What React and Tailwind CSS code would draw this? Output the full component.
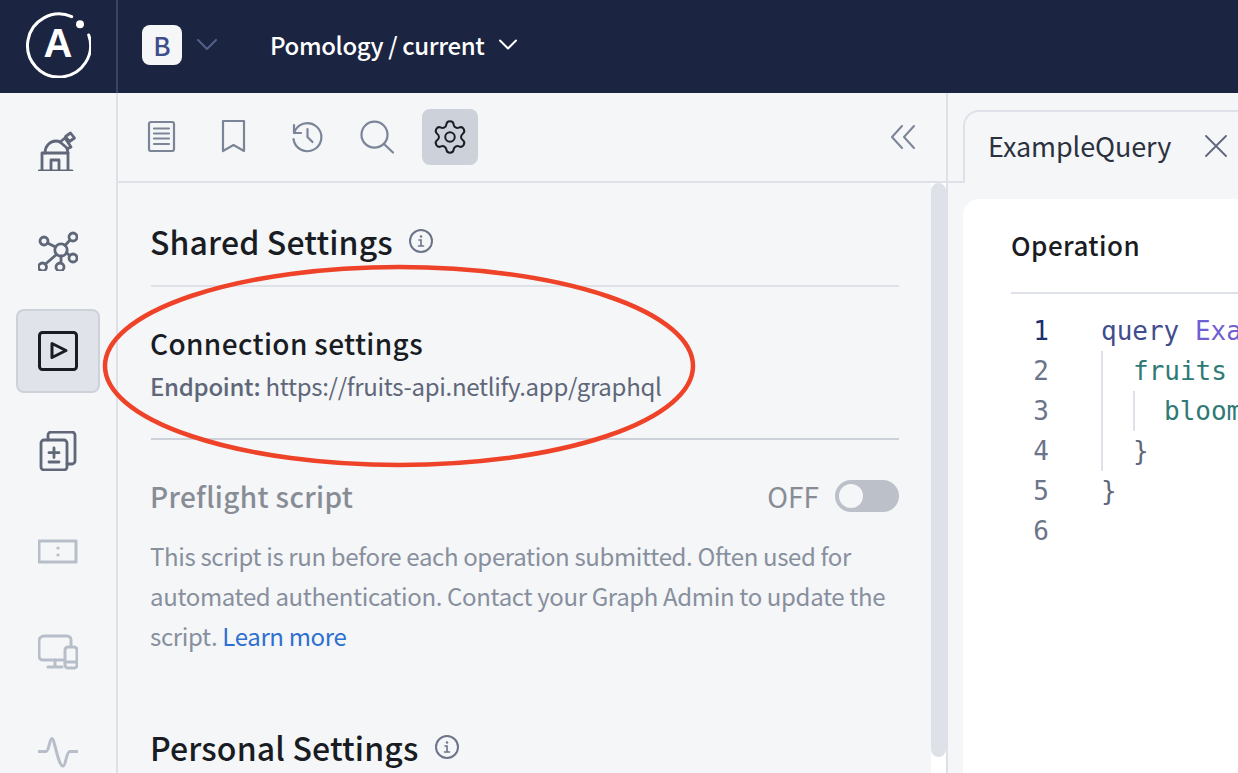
import { Settings } from 'lucide-react'

const sans = 'font-["Noto_Sans_CJK_SC",sans-serif]'

function Svg({ size = 40, className = '', sw = 2.8, children }) {
  return (
    <svg width={size} height={size} viewBox={`0 0 ${size} ${size}`} fill="none" stroke="currentColor" strokeWidth={sw} strokeLinecap="round" strokeLinejoin="round" className={className}>
      {children}
    </svg>
  )
}

function Logo() {
  return (
    <svg width="66" height="66" viewBox="0 0 66 66" fill="none" className="text-white">
      <path d="M46.700 4.700A31.500 31.500 0 1 0 63.700 23" stroke="currentColor" strokeWidth="3" strokeLinecap="round" />
      <circle cx="55" cy="12.300" r="4" fill="currentColor" />
      <text x="33" y="45" textAnchor="middle" fontSize="40" fontWeight="700" fill="currentColor" fontFamily="Liberation Sans, sans-serif">A</text>
    </svg>
  )
}

function Observatory() {
  return (
    <Svg>
      <path d="M1 40h33M4 40V22h26v18M13 40V29h8v11" />
      <path d="M7 22c0-7 5-12 11-12 2 0 3 .4 4 1l7 6 1 5" />
      <path d="M22 11l5-4 6 9-4 2" />
      <path d="M27.500 5.500l5-3.500 4 5-5 3.500z" />
    </Svg>
  )
}

function GraphIcon() {
  return (
    <Svg>
      <circle cx="23" cy="19" r="6.200" />
      <circle cx="6" cy="10" r="4" /><circle cx="35" cy="6" r="4" /><circle cx="35" cy="27" r="4" />
      <circle cx="22" cy="36" r="4" /><circle cx="4.500" cy="36" r="4" />
      <path d="M9.500 12l8 4M32 9l-5 5.500M28.500 21.500l3 3M23 25v7M18.500 23.500L7.500 33" />
    </Svg>
  )
}

function PlayIcon() {
  return (
    <Svg sw={3}>
      <rect x="1.500" y="1.500" width="37" height="37" rx="3" />
      <path d="M14 12.500l14 7-14 7z" />
    </Svg>
  )
}

function DiffIcon() {
  return (
    <Svg>
      <path d="M10 9V4a3 3 0 0 1 3-3h21a3 3 0 0 1 3 3v26a3 3 0 0 1-3 3h-5" />
      <rect x="3" y="9" width="26" height="30" rx="3" />
      <path d="M16 17v9.500M11 21.700h10M11 31h10" />
    </Svg>
  )
}

function CardIcon() {
  return (
    <Svg sw={3}>
      <rect x="1" y="10" width="37" height="21" />
      <circle cx="20" cy="17" r="1.600" fill="currentColor" stroke="none" />
      <circle cx="20" cy="24" r="1.600" fill="currentColor" stroke="none" />
    </Svg>
  )
}

function DevicesIcon() {
  return (
    <Svg sw={3}>
      <path d="M33 14V9a4 4 0 0 0-4-4H6a5 5 0 0 0-5 5v15a4 4 0 0 0 4 4h20" />
      <path d="M17 29v7M10 36h14" />
      <rect x="27" y="16" width="12" height="21" rx="3" />
      <path d="M27 31h12" />
    </Svg>
  )
}

function PulseIcon() {
  return (
    <Svg sw={3}>
      <path d="M1 20.500h7c3 0 3.500-13 6-13s6 27.500 11 27.500c3 0 3-14.500 7-14.500h7" />
    </Svg>
  )
}

function DocIcon() {
  return (
    <Svg sw={2.200}>
      <rect x="7" y="5" width="25" height="29" rx="2" />
      <path d="M12 11.500h15M12 16.500h15M12 21.500h15M12 27h15" />
    </Svg>
  )
}

function BookmarkIcon() {
  return (
    <Svg sw={2.200}>
      <path d="M9 4h21v30l-10.500-6L9 34z" />
    </Svg>
  )
}

function HistoryIcon() {
  return (
    <Svg sw={2.200}>
      <path d="M8 8v8h7" />
      <path d="M8 16A14 14 0 1 1 7.500 22" />
      <path d="M21.500 12v8l5 5" />
    </Svg>
  )
}

function SearchIcon() {
  return (
    <Svg sw={2.200}>
      <circle cx="16.500" cy="17.700" r="13" />
      <path d="M26 27l9 8.500" />
    </Svg>
  )
}

function InfoIcon() {
  return (
    <svg width="24" height="24" viewBox="0 0 24 24" fill="none" stroke="#6b7489" strokeWidth="2" strokeLinecap="round">
      <circle cx="12" cy="12" r="11" />
      <path d="M10 11h2v6M9.500 17h5" strokeWidth="1.600" />
      <circle cx="12" cy="7.500" r="1.200" fill="#6b7489" stroke="none" />
    </svg>
  )
}

const railItems = [
  { icon: Observatory, color: 'text-[#5f6779]' },
  { icon: GraphIcon, color: 'text-[#5f6779]' },
  { icon: PlayIcon, color: 'text-[#191c23]', active: true },
  { icon: DiffIcon, color: 'text-[#5f6779]' },
  { icon: CardIcon, color: 'text-[#b8bec9]' },
  { icon: DevicesIcon, color: 'text-[#b8bec9]' },
  { icon: PulseIcon, color: 'text-[#b8bec9]' },
]

export default function App() {
  return (
    <div className={`relative h-screen w-[1238px] overflow-hidden bg-[#f4f6f8] flex flex-col ${sans}`}>
      {/* Top bar */}
      <header className="h-[93px] shrink-0 bg-[#1b2440] flex items-center">
        <div className="w-[118px] h-full shrink-0 border-r-2 border-[#3a4463] flex items-center justify-center pb-[3px]">
          <Logo />
        </div>
        <div className="flex items-center pb-[3px]">
          <div className="ml-6 w-10 h-10 rounded-lg bg-[#f4f6f8] flex items-center justify-center text-[26px] font-medium text-[#3f4d8c] leading-none">B</div>
          <svg width="20" height="12" viewBox="0 0 20 12" fill="none" stroke="#53608a" strokeWidth="2" strokeLinecap="round" strokeLinejoin="round" className="ml-[15px]"><path d="M1 1l9 9 9-9" /></svg>
          <span className="ml-[53px] text-[24px] tracking-[-0.37px] font-medium text-white leading-[32px]">Pomology / current</span>
          <svg width="20" height="12" viewBox="0 0 20 12" fill="none" stroke="#ffffff" strokeWidth="2" strokeLinecap="round" strokeLinejoin="round" className="ml-[14px]"><path d="M2 1.500l8 8 8-8" /></svg>
        </div>
      </header>

      <div className="flex-1 min-h-0 flex">
        {/* Icon rail */}
        <nav className="w-[118px] shrink-0 border-r-2 border-[#dee1e7] flex flex-col items-center gap-4 pt-4">
          {railItems.map((item, i) => {
            const Icon = item.icon
            return (
              <div key={i} className={`w-[84px] h-[84px] shrink-0 rounded-lg flex items-center justify-center ${item.color} ${item.active ? 'bg-[#e0e3e9] border-2 border-[#cdd2da]' : ''}`}>
                <Icon />
              </div>
            )
          })}
        </nav>

        {/* Settings panel */}
        <aside className="w-[830px] shrink-0 flex flex-col border-r-2 border-[#dee1e7]">
          <div className="h-[90px] shrink-0 border-b-2 border-[#dee1e7] flex items-center pl-4 pr-[31px]">
            <div className="flex items-center gap-4 text-[#7c8598]">
              <div className="w-14 h-14 flex items-center justify-center"><DocIcon /></div>
              <div className="w-14 h-14 flex items-center justify-center"><BookmarkIcon /></div>
              <div className="w-14 h-14 flex items-center justify-center"><HistoryIcon /></div>
              <div className="w-14 h-14 flex items-center justify-center"><SearchIcon /></div>
              <div className="w-14 h-14 rounded-lg bg-[#cdd2da] flex items-center justify-center text-[#191c23]"><Settings size={38} strokeWidth={1.250} /></div>
            </div>
            <svg width="24" height="24" viewBox="0 0 24 24" fill="none" stroke="#7c8598" strokeWidth="2" strokeLinecap="round" strokeLinejoin="round" className="ml-auto"><path d="M11 1L1 12l10 11M23 1L13 12l10 11" /></svg>
          </div>

          <div className="flex-1 min-h-0 flex">
            <div className="w-[813px] shrink-0 pl-[32px] pr-[32px] pt-[38px]">
              <div className="flex items-center gap-4 h-[40px]">
                <h2 className="text-[32px] tracking-[0.13px] font-medium text-[#191c23] leading-[40px]">Shared Settings</h2>
                <InfoIcon />
              </div>
              <div className="ml-px mt-[24px] border-t-2 border-[#dee1e7]" />
              <h3 className="mt-[36px] text-[28px] tracking-[0.36px] font-medium text-[#191c23] leading-[40px]">Connection settings</h3>
              <p className="mt-[5px] text-[24px] tracking-[-0.31px] text-[#5f6779] leading-[36px]"><span className="font-medium">Endpoint:</span> https://fruits-api.netlify.app/graphql</p>
              <div className="ml-px mt-[34px] border-t-2 border-[#cdd2da]" />
              <div className="mt-[40px] flex items-center justify-between h-8">
                <h3 className="text-[28px] tracking-[0.35px] font-medium text-[#888c94] leading-[40px]">Preflight script</h3>
                <div className="flex items-center gap-4">
                  <span className="text-[28px] text-[#888c94] leading-[32px]">OFF</span>
                  <div className="w-16 h-8 rounded-full bg-[#bcc0c9] flex items-center pl-1">
                    <div className="w-6 h-6 rounded-full bg-[#f4f6f8]" />
                  </div>
                </div>
              </div>
              <p className="mt-[24px] text-[24px] tracking-[-0.35px] text-[#888f9d] leading-[40px]">
                This script is run before each operation submitted. Often used for automated authentication. Contact your Graph Admin to update the script. <span className="text-[#2f6fd0]">Learn more</span>
              </p>
              <div className="mt-[71px] flex items-center gap-4 h-[40px]">
                <h2 className="text-[32px] tracking-[0.15px] font-medium text-[#191c23] leading-[40px]">Personal Settings</h2>
                <InfoIcon />
              </div>
            </div>
            <div className="w-[15px] shrink-0 bg-white">
              <div className="h-[574px] rounded-lg bg-[#dee1e7]" />
            </div>
          </div>
        </aside>

        {/* Operation pane */}
        <main className="flex-1 min-w-0 flex flex-col">
          <div className="h-[90px] shrink-0 flex">
            <div className="w-[15px] shrink-0 border-b-2 border-[#dee1e7]" />
            <div className="w-[400px] mt-[17px] rounded-tl-2xl border-t-2 border-l-2 border-[#dee1e7] flex items-center pl-[23px] pb-[4px] gap-[34px]">
              <span className="text-[27px] tracking-[-0.1px] text-[#2c3140] leading-[40px]">ExampleQuery</span>
              <svg width="22" height="22" viewBox="0 0 22 22" fill="none" stroke="#5f6779" strokeWidth="1.800" strokeLinecap="round"><path d="M1 1l20 20M21 1L1 21" /></svg>
            </div>
          </div>
          <div className="flex-1 -mb-[10px] ml-[15px] mt-[16px] bg-white rounded-tl-2xl pl-[48px] pt-[26px]">
            <h3 className="text-[26px] tracking-[0.45px] font-medium text-[#191c23] leading-[40px]">Operation</h3>
            <div className="mt-[27px] border-t-2 border-[#dee1e7]" />
            <div className={'mt-[17px] flex text-[26px] leading-[40px] font-["DejaVu_Sans_Mono",monospace]'}>
              <div className="w-[38px] shrink-0 text-right text-[#6b7489]">
                <div className="text-[#1b2f6e]">1</div>
                <div>2</div>
                <div>3</div>
                <div>4</div>
                <div>5</div>
                <div>6</div>
              </div>
              <div className="ml-[52px] whitespace-pre">
                <div><span className="text-[#3f4d8c]">query</span> <span className="text-[#6f5fd1]">ExampleQuery</span></div>
                <div className="border-l-2 border-[#dee1e7] pl-[30px]">
                  <div className="text-[#2f7a75]">fruits</div>
                  <div className="border-l-2 border-[#dee1e7] pl-[29px] text-[#2f7a75]">bloom</div>
                  <div className="text-[#5f6779]">{'}'}</div>
                </div>
                <div className="text-[#5f6779]">{'}'}</div>
              </div>
            </div>
          </div>
        </main>
      </div>

      {/* Hand-drawn annotation over the connection settings */}
      <svg width="600" height="210" viewBox="0 0 600 210" fill="none" className="absolute left-[100px] top-[261px]">
        <ellipse cx="299" cy="105" rx="294" ry="99" stroke="#ee4328" strokeWidth="4.500" />
      </svg>
    </div>
  )
}
